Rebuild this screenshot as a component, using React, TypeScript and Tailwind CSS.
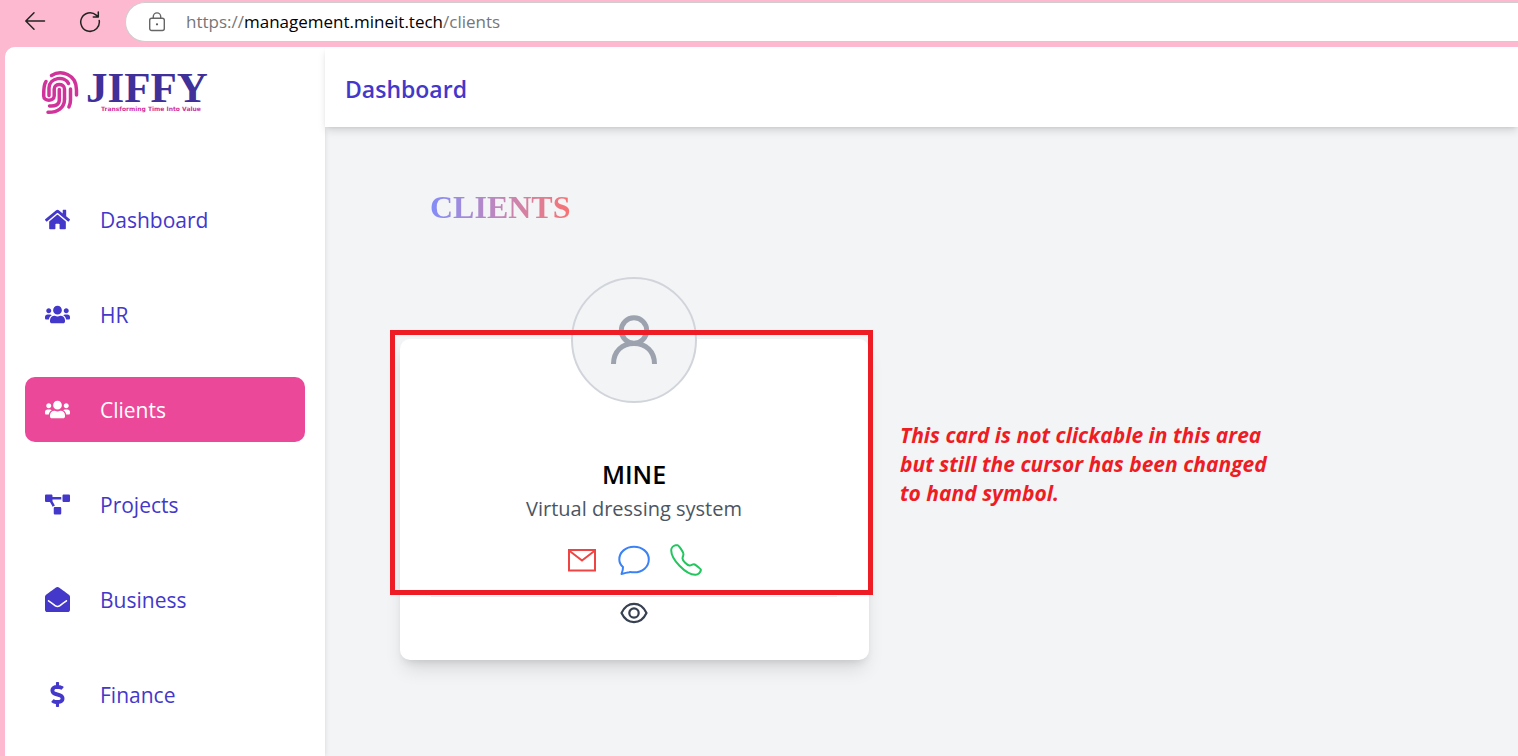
import type { ComponentType, ReactNode } from "react";
import { FaDollarSign, FaEnvelopeOpen, FaHome, FaProjectDiagram, FaUsers } from "react-icons/fa";

type NavEntry = { label: string; icon: ComponentType<{ className?: string }>; active?: boolean };

const NAV: NavEntry[] = [
  { label: "Dashboard", icon: FaHome },
  { label: "HR", icon: FaUsers },
  { label: "Clients", icon: FaUsers, active: true },
  { label: "Projects", icon: FaProjectDiagram },
  { label: "Business", icon: FaEnvelopeOpen },
  { label: "Finance", icon: FaDollarSign },
];

function BrowserBar() {
  return (
    <div className="flex h-[47px] items-start bg-[#fdb9d0]">
      <button type="button" aria-label="Back" className="ml-6 mt-[11px]">
        <svg viewBox="0 0 22 20" className="h-5 w-[22px]" fill="none" stroke="#222" strokeWidth="1.5" strokeLinecap="round" strokeLinejoin="round">
          <path d="M20.5 10H2M10 1.8 1.8 10l8.200 8.200" />
        </svg>
      </button>
      <button type="button" aria-label="Refresh" className="ml-[33px] mt-[10px]">
        <svg viewBox="0 0 22 23" className="h-[23px] w-[22px]" fill="none" stroke="#222" strokeWidth="1.5" strokeLinecap="round" strokeLinejoin="round">
          <path d="M20.200 10.500a9.300 9.300 0 1 1-3-5.400l2 1.800M19.300 2v5h-5" />
        </svg>
      </button>
      <div className="ml-6 mt-0.5 flex h-10 flex-1 items-center rounded-l-full border border-r-0 border-[#d0cdd0] bg-white pl-[22px]">
        <svg viewBox="0 0 18 20" className="h-5 w-[18px]" fill="none" stroke="#666" strokeWidth="1.4">
          <rect x="1.700" y="6.200" width="14.600" height="12.300" rx="2" />
          <path d="M5.300 6V4.600a3.700 3.700 0 0 1 7.400 0V6" />
          <circle cx="9" cy="12.300" r="1.100" fill="#555" stroke="none" />
        </svg>
        <span className="ml-5 text-[17px] text-[#767676]">
          https://<span className="text-black">management.mineit.tech</span>/clients
        </span>
      </div>
    </div>
  );
}

function Logo() {
  return (
    <a href="#home" aria-label="Jiffy" className="ml-9 mt-4 block w-[180px]">
      <svg viewBox="0 -6 180 54" className="h-[54px] w-[180px]">
        <g fill="none" stroke="#d0349b" strokeWidth="3.500" strokeLinecap="round">
          <path d="M10.500 6.500C20 .500 35.500 5 35.500 21v5" />
          <path d="M5 12.500C2.500 16 2.700 20 2.700 27c0 5.500 10.300 5.500 10.500 0v-7c0-6 10.300-6 10.300 0v10" />
          <path d="M8 26.500V19C8.500 8 24 6.500 27.500 14.500" />
          <path d="M18.300 20.500V31c0 4.500-4 6.500-9.800 6" />
          <path d="M23.500 30c0 9-7 13.500-16.500 13.300" />
          <path d="M29.500 20v11c0 3-.6 5-1.600 7" />
        </g>
        <text x="45" y="33" fill="#3f309a" fontSize="43" fontWeight="700" fontFamily="'Liberation Serif',serif">
          JIFFY
        </text>
        <text x="60" y="42" fill="#d0349b" fontSize="6" fontWeight="700" fontFamily="'DejaVu Sans',sans-serif">
          Transforming Time Into Value
        </text>
      </svg>
    </a>
  );
}

function Sidebar() {
  return (
    <aside className="z-10 w-80 shrink-0 bg-white shadow-[0_0_5px_rgb(0_0_0/0.12)]">
      <Logo />
      <nav className="mt-[70px] flex flex-col gap-[30px] px-5">
        {NAV.map(({ label, icon: Icon, active }) => (
          <a
            key={label}
            href={`#${label.toLowerCase()}`}
            aria-current={active ? "page" : undefined}
            className={
              active
                ? "flex h-[65px] items-center gap-[30px] rounded-[10px] bg-[#ec4899] px-5 text-[21px] leading-[34px] text-white"
                : "flex h-[65px] items-center gap-[30px] rounded-[10px] px-5 text-[21px] leading-[34px] text-[#4338ca]"
            }
          >
            <Icon className="size-[25px]" />
            {label}
          </a>
        ))}
      </nav>
    </aside>
  );
}

function CardAction({ label, color, children }: { label: string; color: string; children: ReactNode }) {
  return (
    <button type="button" aria-label={label} className={color}>
      <svg viewBox="0 0 32 32" className="size-8" fill="none" stroke="currentColor" strokeWidth="2" strokeLinejoin="round">
        {children}
      </svg>
    </button>
  );
}

function ClientCard() {
  return (
    <article className="relative mt-28 flex h-[321px] w-[469px] flex-col items-center rounded-[10px] bg-white pr-8 pl-[31px] shadow-[0_12px_19px_-4px_rgb(0_0_0/0.12),0_5px_8px_-4px_rgb(0_0_0/0.12)]">
      <div className="-mt-[62px] flex size-[126px] shrink-0 items-center justify-center rounded-full border-2 border-[#d1d5db] bg-[#f3f4f6]">
        <svg viewBox="0 0 50 50" className="size-[50px]" fill="none" stroke="#9ca3af" strokeWidth="5">
          <circle cx="25" cy="15.500" r="12.700" />
          <path d="M4.500 49C4.500 36.500 13 28.500 25 28.500S45.500 36.500 45.500 49" />
        </svg>
      </div>
      <h2 className="mt-[53px] text-[25px] leading-9 font-semibold text-black">MINE</h2>
      <p className="mt-0.5 text-[20px] leading-[30px] text-[#4b5563]">Virtual dressing system</p>
      <div className="mt-5 flex gap-5">
        <CardAction label="Email" color="text-[#ef4444]">
          <path d="M3 6h26v20.500H3zM3 6.500l13 10 13-10" strokeLinejoin="miter" />
        </CardAction>
        <CardAction label="Message" color="text-[#3b82f6]">
          <path d="M16 2.800c8.300 0 14.800 5.300 14.800 12.700S24.500 28.300 16 28.300c-2 0-3.400-.4-4.800-.1-2.600.3-4.800.9-7.700 1.800 1-2.500 1.600-4.800 1.500-7-2.300-2-3.700-4.500-3.700-7.500C1.300 8.100 7.700 2.800 16 2.800z" />
        </CardAction>
        <CardAction label="Call" color="text-[#22c55e]">
          <path d="M5.600 1.200C3.500 1.500 1.200 3.600 1.200 6.300c0 4.800 4.100 11.200 8.300 15.500 4.500 4.600 11 9.200 16.100 9 2.600-.1 5-2.500 5.300-4.800.1-1.100-4.500-4.600-6.200-5.500-1.500-.7-3 .6-5 1-2.300.2-7.400-5.200-7.200-7.200.2-2 1.400-3.400.8-5-.8-2.400-4.600-8.100-5.700-8.100z" />
        </CardAction>
      </div>
      <div className="mt-5 flex w-full justify-center border-t border-[#eceef1] pt-[5px]">
        <button type="button" aria-label="View client" className="text-[#374151]">
          <svg viewBox="0 0 28 22" className="h-[22px] w-7" fill="none" stroke="currentColor" strokeWidth="2.2">
            <path d="M1.500 11C4.200 5.300 8.600 1.900 14 1.900S23.800 5.300 26.500 11C23.800 16.700 19.400 20.100 14 20.100S4.200 16.700 1.500 11z" strokeLinejoin="round" />
            <circle cx="14" cy="11" r="4.700" />
          </svg>
        </button>
      </div>
      <div className="pointer-events-none absolute -top-[9px] -left-[10px] h-[265px] w-[483px] border-5 border-[#ee1c24]" />
      <p className="absolute top-[82px] left-[500px] w-max text-[21px] leading-[29px] font-bold text-[#ee1c24] italic">
        This card is not clickable in this area
        <br />
        but still the cursor has been changed
        <br />
        to hand symbol.
      </p>
    </article>
  );
}

export default function App() {
  return (
    <div className="flex h-screen flex-col overflow-hidden bg-[#fdb9d0] font-['Open_Sans','Noto_Sans',sans-serif]">
      <BrowserBar />
      <div className="ml-[5px] flex min-h-0 flex-1 overflow-hidden rounded-tl-[10px] bg-[#f3f4f6]">
        <Sidebar />
        <div className="z-10 min-w-0 flex-1">
          <header className="flex h-20 items-center bg-white px-5 pt-1 shadow-[0_5px_8px_-1px_rgb(0_0_0/0.12),0_2px_4px_-2px_rgb(0_0_0/0.12)]">
            <h1 className="text-[23px] font-semibold text-[#4338ca]">Dashboard</h1>
          </header>
          <main className="px-[75px] pt-[60px]">
            <h2 className="ml-[30px] w-max bg-linear-to-r from-[#818cf8] to-[#f87171] bg-clip-text font-['Liberation_Serif',serif] text-[32px] leading-10 font-bold text-transparent">
              CLIENTS
            </h2>
            <ClientCard />
          </main>
        </div>
      </div>
    </div>
  );
}
